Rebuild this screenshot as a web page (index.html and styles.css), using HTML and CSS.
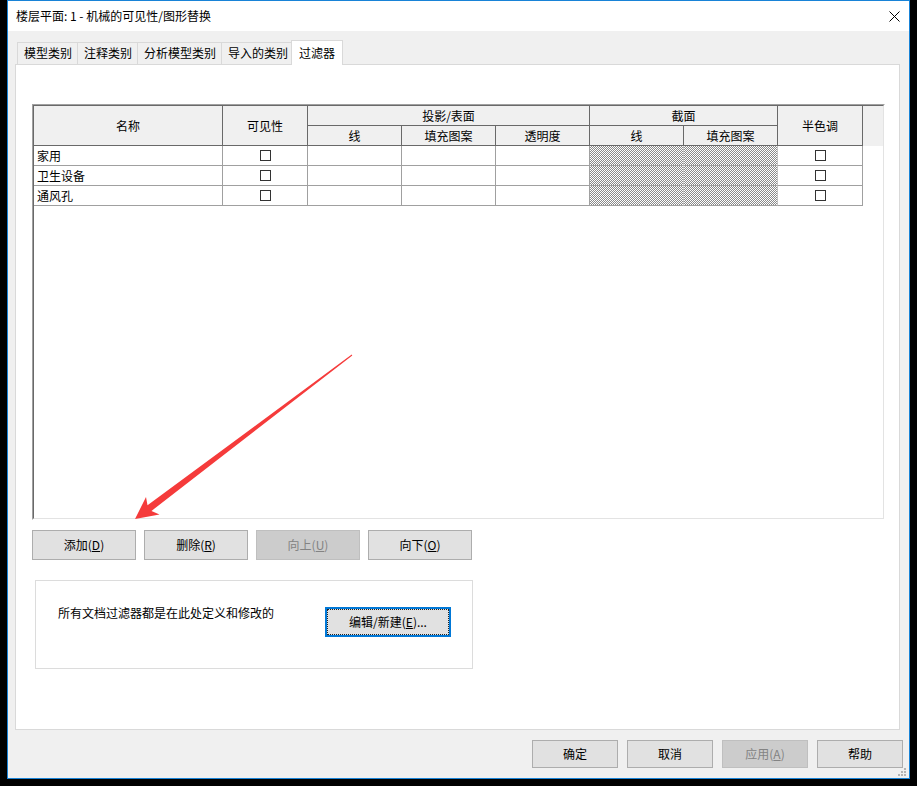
FILE: index.html
```html
<!DOCTYPE html>
<html>
<head>
<meta charset="utf-8">
<title>楼层平面: 1 - 机械的可见性/图形替换</title>
<link rel="stylesheet" href="styles.css">
</head>
<body>
<div class="dialog">
	<div class="titlebar">
		<span class="title">楼层平面: 1 - 机械的可见性/图形替换</span>
		<svg class="close" width="11" height="11" viewBox="0 0 11 11"><path d="M0.5 0.5L10.5 10.5M10.5 0.5L0.5 10.5" stroke="#000" stroke-width="1"/></svg>
	</div>

	<div class="body">
		<div class="tabs">
			<div class="tab">模型类别</div>
			<div class="tab">注释类别</div>
			<div class="tab">分析模型类别</div>
			<div class="tab">导入的类别</div>
			<div class="tab active">过滤器</div>
		</div>

		<div class="panel">
			<div class="grid">
				<div class="grid-in">
					<div class="table">
						<div class="th rows2">名称</div>
						<div class="th rows2">可见性</div>
						<div class="th cols3">投影/表面</div>
						<div class="th cols2">截面</div>
						<div class="th rows2">半色调</div>
						<div class="th rows2 end"></div>
						<div class="th">线</div>
						<div class="th">填充图案</div>
						<div class="th">透明度</div>
						<div class="th">线</div>
						<div class="th">填充图案</div>

						<div class="td">家用</div>
						<div class="td mid"><span class="cb"></span></div>
						<div class="td"></div>
						<div class="td"></div>
						<div class="td"></div>
						<div class="td hatch"></div>
						<div class="td hatch"></div>
						<div class="td mid"><span class="cb"></span></div>
						<div class="td blank"></div>

						<div class="td">卫生设备</div>
						<div class="td mid"><span class="cb"></span></div>
						<div class="td"></div>
						<div class="td"></div>
						<div class="td"></div>
						<div class="td hatch"></div>
						<div class="td hatch"></div>
						<div class="td mid"><span class="cb"></span></div>
						<div class="td blank"></div>

						<div class="td">通风孔</div>
						<div class="td mid"><span class="cb"></span></div>
						<div class="td"></div>
						<div class="td"></div>
						<div class="td"></div>
						<div class="td hatch"></div>
						<div class="td hatch"></div>
						<div class="td mid"><span class="cb"></span></div>
						<div class="td blank"></div>
					</div>
				</div>
			</div>

			<div class="btn-row">
				<button class="btn">添加(<u>D</u>)</button>
				<button class="btn">删除(<u>R</u>)</button>
				<button class="btn disabled">向上(<u>U</u>)</button>
				<button class="btn">向下(<u>O</u>)</button>
			</div>

			<div class="group">
				<span class="group-text">所有文档过滤器都是在此处定义和修改的</span>
				<button class="btn edit">编辑/新建(<u>E</u>)...</button>
			</div>
		</div>
	</div>

	<div class="footer">
		<button class="btn fbtn">确定</button>
		<button class="btn fbtn">取消</button>
		<button class="btn fbtn disabled">应用(<u>A</u>)</button>
		<button class="btn fbtn">帮助</button>
	</div>
</div>

<!-- size grip -->
<svg class="grip" width="10" height="10" viewBox="0 0 10 10">
	<rect x="7" y="0" width="2" height="2" fill="#b4b4b4"/>
	<rect x="4" y="3" width="2" height="2" fill="#b4b4b4"/>
	<rect x="7" y="3" width="2" height="2" fill="#b4b4b4"/>
	<rect x="1" y="6" width="2" height="2" fill="#b4b4b4"/>
	<rect x="4" y="6" width="2" height="2" fill="#b4b4b4"/>
	<rect x="7" y="6" width="2" height="2" fill="#b4b4b4"/>
</svg>

<!-- red annotation arrow -->
<svg class="arrow" width="917" height="786" viewBox="0 0 917 786">
	<polygon points="135,519 146,497 147.5,505.3 351.7,354.6 352.3,355.4 151.5,510.9 159.5,514.5" fill="#f53b3b"/>
</svg>
</body>
</html>
```

FILE: styles.css
```css
* {
	box-sizing: border-box;
}

body {
	margin: 0;
	width: 917px;
	height: 786px;
	overflow: hidden;
	position: relative;
	background: #000;
	font-family: "Noto Sans CJK SC", "Microsoft YaHei", sans-serif;
	font-size: 12px;
	color: #000;
}

.dialog {
	width: 903px;
	height: 779px;
	margin-left: 7px;
	border: 1px solid #1883d7;
	background: #f0f0f0;
}

/* title bar */
.titlebar {
	height: 30px;
	background: #fff;
	display: flex;
	align-items: center;
	padding: 0 9px 0 8px;
}
.title {
	line-height: 16px;
}
.close {
	margin-left: auto;
	display: block;
}

.body {
	padding: 9px 9px 0 7px;
}

/* tabs */
.tabs {
	height: 24px;
	display: flex;
	align-items: flex-end;
	padding-left: 2px;
}
.tab {
	height: 22px;
	line-height: 20px;
	padding: 0 5px 0 6px;
	border: 1px solid #d9d9d9;
	border-bottom: none;
	margin-right: -1px;
	background: #f0f0f0;
}
.tab.active {
	position: relative;
	z-index: 1;
	height: 25px;
	line-height: 23px;
	margin: 0 0 -1px -2px;
	padding: 0 7px;
	background: #fff;
}

.panel {
	height: 666px;
	border: 1px solid #d9d9d9;
	background: #fff;
	padding: 39px 0 0 16px;
}

/* filter grid */
.grid {
	width: 853px;
	height: 416px;
	border: 1px solid;
	border-color: #a0a0a0 #fff #fff #a0a0a0;
}
.grid-in {
	height: 100%;
	border: 1px solid;
	border-color: #696969 #e3e3e3 #e3e3e3 #696969;
}
.table {
	display: grid;
	grid-template-columns: 189px 85px 94px 94px 94px 94px 94px 85px 20px;
	grid-auto-rows: 20px;
}
.th {
	background: #f0f0f0;
	border-right: 1px solid #696969;
	border-bottom: 1px solid #696969;
	display: flex;
	align-items: center;
	justify-content: center;
	line-height: 16px;
}
.th.rows2 {
	grid-row: span 2;
}
.th.cols3 {
	grid-column: span 3;
}
.th.cols2 {
	grid-column: span 2;
}
.th.end {
	border: none;
}
.td {
	border-right: 1px solid #a0a0a0;
	border-bottom: 1px solid #a0a0a0;
	display: flex;
	align-items: center;
	padding-left: 3px;
	line-height: 16px;
}
.td.mid {
	justify-content: center;
	padding-left: 0;
}
.td.hatch {
	background: repeating-conic-gradient(#8a8a8a 0 25%, #fff 0 50%) 0 0 / 2px 2px;
	border-right-color: #c4c4c4;
}
.td.blank {
	border: none;
}
.cb {
	width: 11px;
	height: 11px;
	border: 1px solid #333;
	background: #fff;
}

/* buttons */
.btn {
	font: inherit;
	color: #000;
	padding: 0;
	background: #e1e1e1;
	border: 1px solid #adadad;
	display: flex;
	align-items: center;
	justify-content: center;
	line-height: 16px;
}
.btn.disabled {
	background: #cccccc;
	border-color: #bfbfbf;
	color: #838383;
}
.btn-row {
	display: flex;
	gap: 8px;
	margin-top: 10px;
}
.btn-row .btn {
	width: 104px;
	height: 30px;
}

.group {
	width: 438px;
	height: 89px;
	margin: 20px 0 0 3px;
	border: 1px solid #dcdcdc;
	display: flex;
	align-items: flex-start;
	padding: 24px 0 0 22px;
}
.group-text {
	width: 267px;
	line-height: 16px;
}
.btn.edit {
	position: relative;
	width: 126px;
	height: 30px;
	margin-top: 2px;
	border: 2px solid #0078d7;
}
.btn.edit::after {
	content: "";
	position: absolute;
	inset: 0;
	border: 1px dotted #222;
}

.footer {
	display: flex;
	justify-content: flex-end;
	gap: 9px;
	padding: 10px 6px 0 0;
}
.fbtn {
	width: 86px;
	height: 28px;
}

.grip {
	position: absolute;
	left: 897px;
	top: 768px;
}
.arrow {
	position: absolute;
	left: 0;
	top: 0;
	pointer-events: none;
}
```
